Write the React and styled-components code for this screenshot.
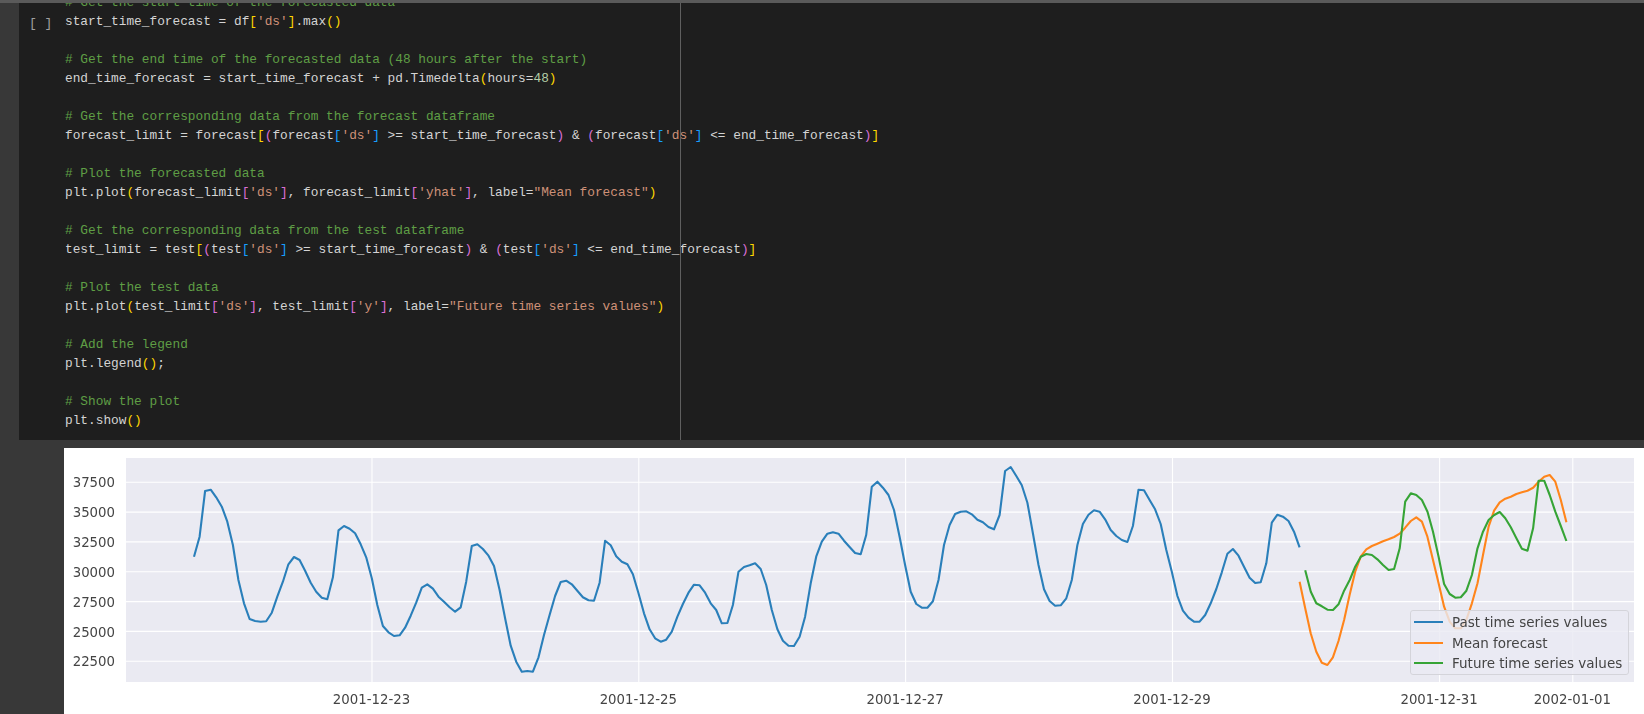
import React from 'react'
import styled, { createGlobalStyle } from 'styled-components'

const GlobalStyle = createGlobalStyle`
  html, body {
    margin: 0;
    padding: 0;
    background: #383838;
  }
`

const Page = styled.div`
  width: 1644px;
  height: 714px;
  overflow: hidden;
  background: #383838;
`
const TopRule = styled.div`
  height: 3px;
  background: #5a5a5a;
`
const CellRow = styled.div`
  display: flex;
  height: 437px;
  padding-left: 19px;
`
const CodeCell = styled.div`
  position: relative;
  flex: 1;
  display: flex;
  overflow: hidden;
  background: #1e1e1e;
`
const RunSlot = styled.div`
  width: 46px;
  padding: 11px 0 0 10px;
  box-sizing: border-box;
  font: 13px/19px 'Liberation Mono', monospace;
  color: #a0a0a0;
  white-space: pre;
`
const CodeBlock = styled.pre`
  margin: -10px 0 0 0;
  font: 12.8px/19px 'Liberation Mono', monospace;
  color: #d4d4d4;
`
const Comment = styled.span`
  color: #5f9e45;
`
const Str = styled.span`
  color: #ce9178;
`
const Num = styled.span`
  color: #b5cea8;
`
const Br = styled.span`
  color: ${props => (props.$level === 1 ? '#ffd700' : props.$level === 2 ? '#da70d6' : '#179fff')};
`
const Ruler = styled.div`
  position: absolute;
  left: 661px;
  top: 0;
  bottom: 0;
  width: 1px;
  background: #5f5f5f;
`
const Output = styled.div`
  position: relative;
  margin: 8px 0 0 64px;
  height: 266px;
  background: #fff;
`
const Chart = styled.svg`
  display: block;
  filter: blur(0.35px);
`
const TickText = styled.text`
  font: 13.3px 'DejaVu Sans', sans-serif;
  fill: #444;
`
const Legend = styled.div`
  position: absolute;
  left: 1346px;
  top: 162px;
  width: 219px;
  height: 65px;
  box-sizing: border-box;
  padding: 1px 0 0 3px;
  display: flex;
  flex-direction: column;
  background: rgba(234, 234, 242, 0.8);
  border: 1px solid #d4d4da;
  border-radius: 3px;
  filter: blur(0.3px);
`
const LegendRow = styled.div`
  display: flex;
  align-items: center;
  gap: 9px;
  height: 20.4px;
  font: 13.5px 'DejaVu Sans', sans-serif;
  color: #444;
  white-space: nowrap;
`
const LegendLine = styled.span`
  width: 29px;
  height: 2px;
  background: ${props => props.$color};
`

const BLUE = '#2a7fba'
const ORANGE = '#ff851b'
const GREEN = '#36a436'

// y values traced from the plot, hourly, in 1/3 px from y=440 on the page
const past = [
  350, 290, 153, 149, 172, 200, 245, 315, 420, 490, 537, 543, 545, 544, 518, 470, 425, 373, 351, 360,
  392, 428, 455, 473, 478, 412, 271, 258, 266, 280, 313, 352, 415, 495, 558, 577, 588, 586, 563, 527,
  488, 443, 433, 446, 470, 485, 502, 515, 502, 425, 318, 313, 327, 347, 378, 450, 535, 617, 665, 695,
  693, 695, 652, 585, 525, 468, 426, 422, 433, 452, 472, 481, 482, 428, 302, 316, 349, 365, 373, 403,
  460, 520, 568, 595, 605, 599, 575, 530, 492, 458, 434, 436, 458, 490, 510, 550, 549, 495, 395, 381,
  376, 370, 387, 435, 510, 568, 602, 617, 618, 590, 530, 430, 350, 305, 281, 277, 281, 302, 321, 339,
  343, 285, 140, 125, 143, 165, 210, 290, 375, 455, 492, 503, 503, 484, 420, 315, 255, 222, 215, 214,
  223, 239, 247, 261, 268, 225, 93, 81, 108, 136, 188, 280, 375, 448, 483, 497, 496, 475, 420, 315,
  252, 224, 211, 215, 238, 270, 288, 300, 306, 258, 149, 151, 180, 208, 252, 330, 395, 468, 512, 533,
  545, 545, 525, 490, 447, 397, 341, 327, 347, 380, 413, 429, 427, 370, 248, 224, 230, 243, 275, 322
]
const mean = [
  425, 505, 580, 635, 668, 675, 652, 603, 540, 465, 395, 350, 328, 318, 311, 304, 298, 291, 281, 263,
  243, 232, 245, 290, 360, 430, 500, 545, 565, 565, 540, 490, 430, 345, 260, 212, 187, 176, 170, 162,
  157, 152, 143, 125, 110, 105, 125, 180, 247
]
const future = [
  391, 455, 490, 499, 509, 510, 493, 452, 420, 380, 350, 342, 345, 358, 375, 390, 387, 325, 185, 160,
  165, 180, 215, 275, 350, 432, 462, 473, 472, 452, 405, 325, 275, 240, 225, 216, 235, 262, 295, 326,
  332, 265, 122, 122, 165, 215, 258, 303
]

// page px minus the output origin (64, 448)
const OX = 64
const OY = 448
const line = (ys, x0, x1) =>
  ys
    .map((y, i) => `${(x0 + (i * (x1 - x0)) / (ys.length - 1) - OX).toFixed(1)},${(440 + y / 3 - OY).toFixed(1)}`)
    .join(' ')

const yTicks = [
  ['37500', 482.3],
  ['35000', 512.1],
  ['32500', 541.9],
  ['30000', 571.8],
  ['27500', 601.6],
  ['25000', 631.4],
  ['22500', 661.3]
]
const xTicks = [
  ['2001-12-23', 372],
  ['2001-12-25', 638.8],
  ['2001-12-27', 905.6],
  ['2001-12-29', 1172.5],
  ['2001-12-31', 1439.6],
  ['2002-01-01', 1572.8]
]

const PlotChart = () => (
  <Chart width="1580" height="266" viewBox="0 0 1580 266">
    <rect x="62" y="10" width="1508" height="224" fill="#eaeaf2" />
    {yTicks.map(([, y]) => (
      <line key={y} x1="62" x2="1570" y1={y - OY} y2={y - OY} stroke="#fff" strokeWidth="1.1" />
    ))}
    {xTicks.map(([, x]) => (
      <line key={x} x1={x - OX} x2={x - OX} y1="10" y2="234" stroke="#fff" strokeWidth="1.1" />
    ))}
    <polyline points={line(past, 194, 1299.6)} fill="none" stroke={BLUE} strokeWidth="2.1" strokeLinejoin="round" />
    <polyline points={line(mean, 1299.6, 1566.4)} fill="none" stroke={ORANGE} strokeWidth="2.1" strokeLinejoin="round" />
    <polyline points={line(future, 1305.2, 1566.4)} fill="none" stroke={GREEN} strokeWidth="2.1" strokeLinejoin="round" />
    {yTicks.map(([label, y]) => (
      <TickText key={label} x="51" y={y - OY + 0.6} textAnchor="end" dominantBaseline="central">
        {label}
      </TickText>
    ))}
    {xTicks.map(([label, x]) => (
      <TickText key={label} x={x - OX - 0.5} y="251.5" textAnchor="middle" dominantBaseline="central">
        {label}
      </TickText>
    ))}
  </Chart>
)

const App = () => (
  <Page>
    <GlobalStyle />
    <TopRule />
    <CellRow>
      <CodeCell>
        <RunSlot>[ ]</RunSlot>
        <CodeBlock>
          <Comment># Get the start time of the forecasted data</Comment>
          {'\nstart_time_forecast = df'}
          <Br $level={1}>[</Br>
          <Str>'ds'</Str>
          <Br $level={1}>]</Br>
          .max<Br $level={1}>()</Br>
          {'\n\n'}
          <Comment># Get the end time of the forecasted data (48 hours after the start)</Comment>
          {'\nend_time_forecast = start_time_forecast + pd.Timedelta'}
          <Br $level={1}>(</Br>
          hours=<Num>48</Num>
          <Br $level={1}>)</Br>
          {'\n\n'}
          <Comment># Get the corresponding data from the forecast dataframe</Comment>
          {'\nforecast_limit = forecast'}
          <Br $level={1}>[</Br>
          <Br $level={2}>(</Br>
          forecast<Br $level={3}>[</Br>
          <Str>'ds'</Str>
          <Br $level={3}>]</Br>
          {' >= start_time_forecast'}
          <Br $level={2}>)</Br>
          {' & '}
          <Br $level={2}>(</Br>
          forecast<Br $level={3}>[</Br>
          <Str>'ds'</Str>
          <Br $level={3}>]</Br>
          {' <= end_time_forecast'}
          <Br $level={2}>)</Br>
          <Br $level={1}>]</Br>
          {'\n\n'}
          <Comment># Plot the forecasted data</Comment>
          {'\nplt.plot'}
          <Br $level={1}>(</Br>
          forecast_limit<Br $level={2}>[</Br>
          <Str>'ds'</Str>
          <Br $level={2}>]</Br>
          {', forecast_limit'}
          <Br $level={2}>[</Br>
          <Str>'yhat'</Str>
          <Br $level={2}>]</Br>
          {', label='}
          <Str>"Mean forecast"</Str>
          <Br $level={1}>)</Br>
          {'\n\n'}
          <Comment># Get the corresponding data from the test dataframe</Comment>
          {'\ntest_limit = test'}
          <Br $level={1}>[</Br>
          <Br $level={2}>(</Br>
          test<Br $level={3}>[</Br>
          <Str>'ds'</Str>
          <Br $level={3}>]</Br>
          {' >= start_time_forecast'}
          <Br $level={2}>)</Br>
          {' & '}
          <Br $level={2}>(</Br>
          test<Br $level={3}>[</Br>
          <Str>'ds'</Str>
          <Br $level={3}>]</Br>
          {' <= end_time_forecast'}
          <Br $level={2}>)</Br>
          <Br $level={1}>]</Br>
          {'\n\n'}
          <Comment># Plot the test data</Comment>
          {'\nplt.plot'}
          <Br $level={1}>(</Br>
          test_limit<Br $level={2}>[</Br>
          <Str>'ds'</Str>
          <Br $level={2}>]</Br>
          {', test_limit'}
          <Br $level={2}>[</Br>
          <Str>'y'</Str>
          <Br $level={2}>]</Br>
          {', label='}
          <Str>"Future time series values"</Str>
          <Br $level={1}>)</Br>
          {'\n\n'}
          <Comment># Add the legend</Comment>
          {'\nplt.legend'}
          <Br $level={1}>()</Br>
          {';\n\n'}
          <Comment># Show the plot</Comment>
          {'\nplt.show'}
          <Br $level={1}>()</Br>
        </CodeBlock>
        <Ruler />
      </CodeCell>
    </CellRow>
    <Output>
      <PlotChart />
      <Legend>
        <LegendRow>
          <LegendLine $color={BLUE} />
          Past time series values
        </LegendRow>
        <LegendRow>
          <LegendLine $color={ORANGE} />
          Mean forecast
        </LegendRow>
        <LegendRow>
          <LegendLine $color={GREEN} />
          Future time series values
        </LegendRow>
      </Legend>
    </Output>
  </Page>
)

export default App
